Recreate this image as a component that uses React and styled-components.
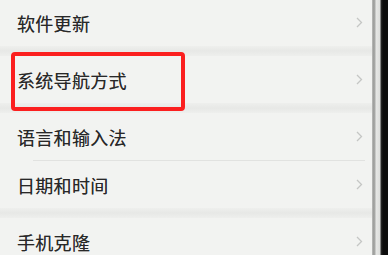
import React from "react";
import styled, { createGlobalStyle } from "styled-components";

const Global = createGlobalStyle`
  html, body { margin: 0; padding: 0; background: #f1f2f0; overflow: hidden; }
  #root { width: 388px; height: 255px; }
`;

const Frame = styled.div`
  display: flex;
  width: 388px;
  height: 255px;
  overflow: hidden;
`;

const Screen = styled.div`
  flex: 1;
  display: flex;
  flex-direction: column;
  background: #f1f2f0;
  margin-top: -1px;
`;

const Bezel = styled.div`
  width: 16px;
  flex: none;
  background: linear-gradient(
    to right,
    #c9cac8 0px,
    #9c9d9b 1px,
    #a9aaa8 3px,
    #e6e7e5 4px,
    #dcdddb 8px,
    #2a2a2a 9px,
    #0c0c0c 11px,
    #0c0c0c 16px
  );
`;

const Group = styled.div`
  display: flex;
  flex-direction: column;
  background: #f2f3f1;
`;

const Gap = styled.div`
  height: 10px;
  flex: none;
  background: linear-gradient(to bottom, #eeefed, #e7e8e6 50%, #eeefed);
`;

const Row = styled.div`
  position: relative;
  height: 47px;
  flex: none;
  display: flex;
  align-items: center;
  justify-content: space-between;
  padding: 0 9px 0 17px;
`;

const Divider = styled.div`
  height: 1px;
  margin: 0 7px 0 33px;
  background: #e1e2e0;
`;

const Label = styled.span`
  font-family: "Noto Sans CJK SC", "Noto Sans", sans-serif;
  font-size: 18px;
  line-height: 1;
  color: #282828;
  letter-spacing: 0.3px;
  text-shadow: 0 0 0.5px rgba(40, 40, 40, 0.6);
`;

const Chevron = styled.svg`
  width: 7px;
  height: 11px;
  flex: none;
`;

const Highlight = styled.div`
  position: absolute;
  left: 11px;
  top: -4px;
  width: 174px;
  height: 59px;
  box-sizing: border-box;
  border: 4px solid #fb1f1f;
  border-radius: 4px;
  pointer-events: none;
`;

const Arrow = () => (
  <Chevron viewBox="0 0 7 11">
    <polyline
      points="1,1 5.5,5.5 1,10"
      fill="none"
      stroke="#c5c6c4"
      strokeWidth="1.3"
    />
  </Chevron>
);

const Item = ({ label, marked }) => (
  <Row>
    <Label>{label}</Label>
    <Arrow />
    {marked && <Highlight />}
  </Row>
);

export default function App() {
  return (
    <>
      <Global />
      <Frame>
        <Screen>
          <Group>
            <Item label="软件更新" />
          </Group>
          <Gap />
          <Group>
            <Item label="系统导航方式" marked />
          </Group>
          <Gap />
          <Group>
            <Item label="语言和输入法" />
            <Divider />
            <Item label="日期和时间" />
          </Group>
          <Gap />
          <Group>
            <Item label="手机克隆" />
          </Group>
        </Screen>
        <Bezel />
      </Frame>
    </>
  );
}
